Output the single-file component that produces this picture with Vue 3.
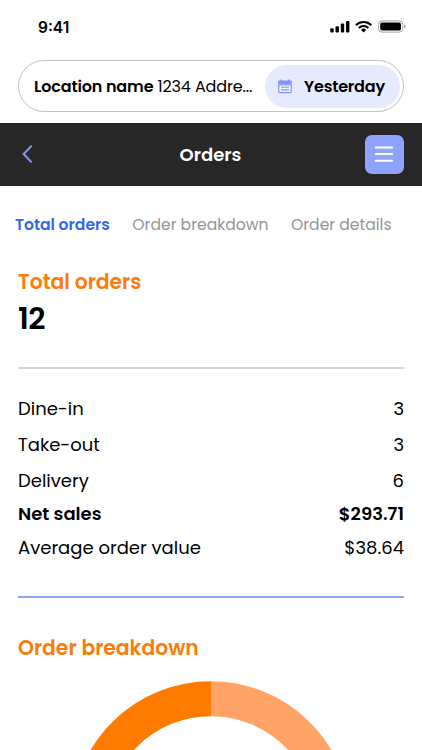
<template>
  <div class="screen">
    <div class="status-bar">
      <span class="time">9:41</span>
      <svg class="status-icons" width="76" height="14" viewBox="0 0 76 14">
        <rect x="0.3" y="8.2" width="3.4" height="4.2" rx="1" />
        <rect x="5.5" y="6.2" width="3.4" height="6.2" rx="1" />
        <rect x="10.8" y="3.6" width="3.4" height="8.8" rx="1" />
        <rect x="16" y="1" width="3.4" height="11.4" rx="1" />
        <g fill="none" stroke="#000" stroke-width="2.1">
          <path d="M25.9 5.2A11 11 0 0 1 41.3 5.2" />
          <path d="M28.8 8A6.8 6.8 0 0 1 38.4 8" />
        </g>
        <path d="M33.6 12.6L31 9.9A3.7 3.7 0 0 1 36.2 9.9Z" />
        <rect x="48.5" y="0.9" width="24.2" height="11.2" rx="3.4" fill="none" stroke="#a5a5a5" />
        <rect x="50.2" y="2.5" width="20.8" height="8" rx="1.8" />
        <path d="M74 4.6Q75.6 5.2 75.6 6.5Q75.6 7.8 74 8.4Z" fill="#a5a5a5" />
      </svg>
    </div>

    <div class="location-bar">
      <div class="location"><b>Location name</b><span class="address">1234 Addre...</span></div>
      <button class="date">
        <svg width="14" height="15" viewBox="0 0 14 15">
          <path d="M1.2 1.6H2.4V0.4H4V1.6H10V0.4H11.6V1.6H12.8Q13.8 1.6 13.8 2.6V4.9H0.2V2.6Q0.2 1.6 1.2 1.6Z" fill="#7d95fa" />
          <path d="M0.8 5.9V13.1Q0.8 13.6 1.3 13.6H12.7Q13.2 13.6 13.2 13.1V5.9Z" fill="#f1f3ff" stroke="#7d95fa" stroke-width="1.2" />
          <path d="M3 8.3H11M3 10.9H11" stroke="#7d95fa" stroke-width="1.1" />
        </svg>
        <span>Yesterday</span>
      </button>
    </div>

    <header class="header">
      <svg class="back" width="12" height="20" viewBox="0 0 12 20">
        <path d="M9.6 1.8L1.6 10L9.6 18.4" fill="none" stroke="#8499ed" stroke-width="2" />
      </svg>
      <h1>Orders</h1>
      <button class="menu">
        <svg width="20" height="18" viewBox="0 0 20 18">
          <path d="M1.7 2.4H18.1M1.7 9.1H18.1M1.7 15.8H18.1" stroke="#fff" stroke-width="2" stroke-linecap="round" />
        </svg>
      </button>
    </header>

    <nav class="tabs">
      <a
        v-for="(tab, index) in tabs"
        :key="tab"
        :class="['tab', { active: currentTab === index }]"
        @click="currentTab = index"
      >{{ tab }}</a>
    </nav>

    <section class="total">
      <h2>Total orders</h2>
      <div class="count">12</div>
    </section>

    <ul class="summary">
      <li v-for="row in rows" :key="row.label" :class="row.type">
        <span class="label">{{ row.label }}</span>
        <span class="value">{{ row.value }}</span>
      </li>
    </ul>

    <section class="breakdown">
      <h2>Order breakdown</h2>
      <svg class="chart" width="280" height="280" viewBox="0 0 280 280">
        <path d="M140 17.75A122.25 122.25 0 0 1 140 262.25" fill="none" stroke="#ffa466" stroke-width="35" />
        <path d="M140 262.25A122.25 122.25 0 0 1 140 17.75" fill="none" stroke="#ff7b00" stroke-width="35" />
      </svg>
    </section>
  </div>
</template>

<script setup>
import { ref } from 'vue';

const tabs = ['Total orders', 'Order breakdown', 'Order details'];
const currentTab = ref(0);

const rows = [
  { label: 'Dine-in', value: '3', type: 'dine' },
  { label: 'Take-out', value: '3', type: 'take' },
  { label: 'Delivery', value: '6', type: 'delivery' },
  { label: 'Net sales', value: '$293.71', type: 'net' },
  { label: 'Average order value', value: '$38.64', type: 'average' }
];
</script>

<style>
body {
  margin: 0;
  overflow: hidden;
}
</style>

<style scoped>
.screen {
  box-sizing: border-box;
  height: 750px;
  overflow: hidden;
  background: #fff;
  color: #000;
  font-family: Poppins, Inter, "Liberation Sans", sans-serif;
  white-space: nowrap;
}

button {
  border: none;
  padding: 0;
  font: inherit;
  color: inherit;
  cursor: pointer;
}

.status-bar {
  display: flex;
  justify-content: space-between;
  height: 60px;
  padding: 0 16px 0 38px;
}

.time {
  margin-top: 18px;
  font-family: Inter, sans-serif;
  font-size: 15.5px;
  line-height: 20px;
  font-weight: 600;
}

.status-icons {
  margin-top: 20px;
}

.location-bar {
  display: flex;
  align-items: center;
  justify-content: space-between;
  box-sizing: border-box;
  height: 52px;
  margin: 0 18px;
  padding: 0 3px 0 15px;
  border: 1px solid #c2c2c2;
  border-radius: 26px;
  font-size: 16px;
}

.location {
  display: flex;
  gap: 4px;
  letter-spacing: -0.15px;
}

.location b {
  font-weight: 600;
}

.address {
  letter-spacing: -0.12px;
}

.date {
  display: flex;
  align-items: center;
  box-sizing: border-box;
  width: 135px;
  height: 43px;
  padding-left: 13px;
  gap: 12px;
  border-radius: 22px;
  background: #e6eaff;
  font-weight: 600;
  letter-spacing: -0.2px;
}

.header {
  display: flex;
  align-items: center;
  justify-content: space-between;
  box-sizing: border-box;
  height: 63px;
  margin-top: 11px;
  padding: 0 18px 1px 22px;
  background: #272727;
  color: #fff;
}

.header h1 {
  margin: 0 0 0 22px;
  font-size: 18px;
  font-weight: 600;
}

.menu {
  display: flex;
  align-items: center;
  justify-content: center;
  width: 39px;
  height: 39px;
  border-radius: 7px;
  background: #8ea2ff;
}

.tabs {
  display: flex;
  gap: 22.5px;
  margin-top: 27px;
  padding-left: 15px;
  font-size: 15.6px;
  line-height: 24px;
  color: #949494;
}

.tab.active {
  color: #3366ea;
  font-weight: 600;
}

.total {
  height: 100px;
  margin: 30px 18px 0;
  border-bottom: 2px solid #d4d4d4;
}

h2 {
  margin: 0;
  font-size: 20.3px;
  line-height: 30px;
  font-weight: 600;
  color: #fb7c09;
}

.count {
  margin-top: 4px;
  font-size: 30px;
  line-height: 36px;
  font-weight: 600;
  letter-spacing: -0.5px;
}

.summary {
  box-sizing: border-box;
  height: 229px;
  margin: 0 18px;
  padding: 22px 0 0;
  border-bottom: 2px solid #90a4f4;
  list-style: none;
  font-size: 18px;
  line-height: 36px;
}

.summary li {
  display: flex;
  justify-content: space-between;
}

.summary .net,
.summary .average {
  line-height: 34px;
}

.summary .net {
  margin-top: -2px;
  font-weight: 600;
}

.breakdown {
  display: flex;
  flex-direction: column;
  margin: 35px 18px 0;
}

.chart {
  align-self: center;
  flex: none;
  margin-top: 18px;
}
</style>
